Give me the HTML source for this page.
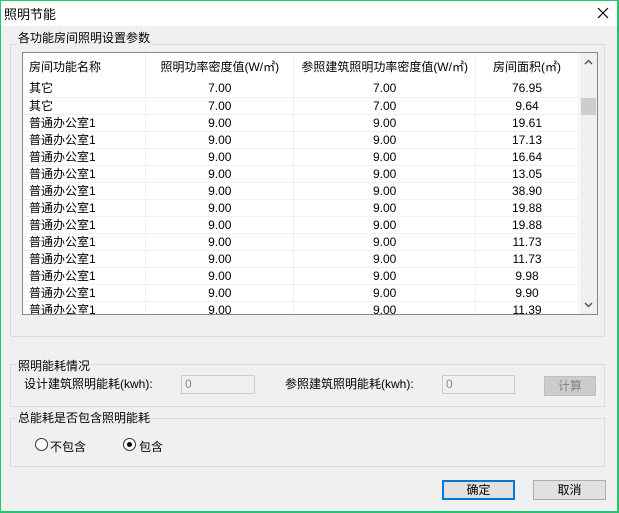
<!DOCTYPE html>
<html><head><meta charset="utf-8"><style>
*{margin:0;padding:0;box-sizing:border-box}
body{width:619px;height:513px;overflow:hidden;background:#f0f0f0;font-family:"Liberation Sans","Noto Sans CJK SC",sans-serif;font-size:12px;color:#000;position:relative}
.win{position:absolute;left:0;top:0;width:619px;height:513px;border:1px solid #1ec86e;border-width:1px 2px 2px 1px}
.title{position:absolute;left:0;top:0;width:619px;height:26px;background:#fff}
.a{position:absolute;white-space:nowrap}
.grp{position:absolute;border:1px solid #dcdcdc}
.lg{position:absolute;background:#f0f0f0;padding:0 1px;line-height:14px}
.tbl{position:absolute;left:22px;top:52px;width:576px;height:263px;border:1px solid #828790;background:#fff;overflow:hidden}
table{border-collapse:collapse;position:absolute;left:0;top:0;width:556px}
td{height:17px;line-height:16px;border-bottom:1px solid #f0f0f0;border-right:1px solid #f0f0f0;text-align:center;padding:0}
td:first-child{text-align:left;padding-left:6px}
tr.h td{height:27px;border-bottom:none;color:#000}
.sb{position:absolute;right:0;top:0;width:17px;height:261px;background:#f0f0f0}
.inp{position:absolute;height:19px;border:1px solid #ccc;background:#f0f0f0;color:#888;padding-left:3px;line-height:17px}
.btn{position:absolute;border:1px solid #adadad;background:#e1e1e1;text-align:center}
.rad{position:absolute;width:13px;height:13px;border:1px solid #333;border-radius:50%;background:#fff}
</style></head><body>
<div class="title"></div>
<div class="a" style="left:4px;top:4px;font-size:13px">照明节能</div>
<svg class="a" style="left:597px;top:7px" width="12" height="12"><path d="M1 1L11 11M11 1L1 11" stroke="#000" stroke-width="1.2"/></svg>

<div class="grp" style="left:10px;top:44px;width:595px;height:293px"></div>
<div class="lg" style="left:17px;top:31px;font-size:12px">各功能房间照明设置参数</div>
<div class="tbl">
<table>
<colgroup><col style="width:123px"><col style="width:148px"><col style="width:182px"><col style="width:103px"></colgroup>
<tr class="h"><td>房间功能名称</td><td>照明功率密度值(W/㎡)</td><td>参照建筑照明功率密度值(W/㎡)</td><td>房间面积(㎡)</td></tr>
<tr><td>其它</td><td>7.00</td><td>7.00</td><td>76.95</td></tr>
<tr><td>其它</td><td>7.00</td><td>7.00</td><td>9.64</td></tr>
<tr><td>普通办公室1</td><td>9.00</td><td>9.00</td><td>19.61</td></tr>
<tr><td>普通办公室1</td><td>9.00</td><td>9.00</td><td>17.13</td></tr>
<tr><td>普通办公室1</td><td>9.00</td><td>9.00</td><td>16.64</td></tr>
<tr><td>普通办公室1</td><td>9.00</td><td>9.00</td><td>13.05</td></tr>
<tr><td>普通办公室1</td><td>9.00</td><td>9.00</td><td>38.90</td></tr>
<tr><td>普通办公室1</td><td>9.00</td><td>9.00</td><td>19.88</td></tr>
<tr><td>普通办公室1</td><td>9.00</td><td>9.00</td><td>19.88</td></tr>
<tr><td>普通办公室1</td><td>9.00</td><td>9.00</td><td>11.73</td></tr>
<tr><td>普通办公室1</td><td>9.00</td><td>9.00</td><td>11.73</td></tr>
<tr><td>普通办公室1</td><td>9.00</td><td>9.00</td><td>9.98</td></tr>
<tr><td>普通办公室1</td><td>9.00</td><td>9.00</td><td>9.90</td></tr>
<tr><td>普通办公室1</td><td>9.00</td><td>9.00</td><td>11.39</td></tr>
</table>
<div class="sb">
<svg class="a" style="left:4px;top:6px" width="9" height="6"><path d="M1 5L4.5 1.5L8 5" stroke="#555" stroke-width="1.5" fill="none"/></svg>
<div class="a" style="left:1px;top:45px;width:15px;height:17px;background:#cdcdcd"></div>
<svg class="a" style="left:4px;top:249px" width="9" height="6"><path d="M1 1L4.5 4.5L8 1" stroke="#555" stroke-width="1.5" fill="none"/></svg>
</div>
</div>

<div class="grp" style="left:10px;top:364px;width:595px;height:43px"></div>
<div class="lg" style="left:17px;top:359px">照明能耗情况</div>
<div class="a" style="left:24px;top:375px">设计建筑照明能耗(kwh):</div>
<div class="inp" style="left:181px;top:375px;width:74px">0</div>
<div class="a" style="left:285px;top:375px">参照建筑照明能耗(kwh):</div>
<div class="inp" style="left:442px;top:375px;width:73px">0</div>
<div class="btn" style="left:544px;top:376px;width:52px;height:20px;background:#ccc;border-color:#bfbfbf;color:#838383;line-height:18px">计算</div>

<div class="grp" style="left:10px;top:418px;width:595px;height:49px"></div>
<div class="lg" style="left:17px;top:411px">总能耗是否包含照明能耗</div>
<div class="rad" style="left:35px;top:438px"></div>
<div class="a" style="left:50px;top:438px">不包含</div>
<div class="rad" style="left:123px;top:438px"><div style="position:absolute;left:3px;top:3px;width:5px;height:5px;border-radius:50%;background:#000"></div></div>
<div class="a" style="left:139px;top:438px">包含</div>

<div class="btn" style="left:442px;top:480px;width:73px;height:20px;border:2px solid #0078d7;line-height:16px">确定</div>
<div class="btn" style="left:533px;top:480px;width:73px;height:20px;line-height:18px">取消</div>
<div class="win"></div>
</body></html>
